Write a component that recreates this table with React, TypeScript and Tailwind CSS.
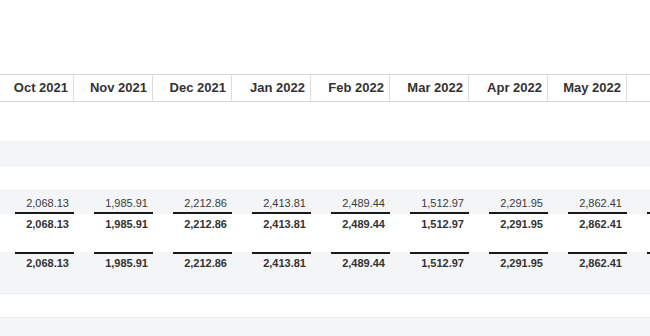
const months = [
  "Oct 2021",
  "Nov 2021",
  "Dec 2021",
  "Jan 2022",
  "Feb 2022",
  "Mar 2022",
  "Apr 2022",
  "May 2022",
  "",
]

// last column is cut off by the window, so it shows no value
const values = [
  "2,068.13",
  "1,985.91",
  "2,212.86",
  "2,413.81",
  "2,489.44",
  "1,512.97",
  "2,291.95",
  "2,862.41",
  "",
]

function Band({ className }: { className: string }) {
  return <div className={`w-full ${className}`} />
}

export default function App() {
  return (
    <div className="w-[650px] h-[336px] overflow-hidden bg-white text-[#333] font-['Liberation_Sans',Arial,sans-serif]">
      <div className="h-[74px]" />

      <div className="-ml-[5px] flex h-[28px] border-y border-[#d6d6d6]">
        {months.map((m, i) => (
          <div
            key={i}
            className="w-[79px] shrink-0 border-r border-[#dcdcdc] flex items-center justify-end pr-[5px] text-[13px] font-bold leading-[16px]"
          >
            {m}
          </div>
        ))}
      </div>

      <Band className="h-[39px]" />
      <Band className="h-[25px] bg-[#f4f5f7] border-y border-[#eceef0]" />
      <Band className="h-[24px]" />

      {/* detail line, underlined */}
      <div className="-ml-[5px] flex h-[24px] bg-[#f4f5f7] border-t border-[#eceef0]">
        {values.map((v, i) => (
          <div key={i} className="w-[79px] shrink-0 pl-[20px]">
            <div className="h-full flex items-end justify-end pr-[5px] pb-[2px] border-b-2 border-[#1a1a1a] text-[11px] leading-[14px] text-[#3a3a3a]">
              {v}
            </div>
          </div>
        ))}
      </div>

      {/* subtotal */}
      <div className="-ml-[5px] flex h-[38px]">
        {values.map((v, i) => (
          <div
            key={i}
            className="w-[79px] shrink-0 flex justify-end pr-[5px] pt-[3px] text-[11px] leading-[14px] font-bold"
          >
            {v}
          </div>
        ))}
      </div>

      {/* total */}
      <div className="-ml-[5px] flex h-[42px] bg-[#f4f5f7] border-b border-[#e9eaec]">
        {values.map((v, i) => (
          <div key={i} className="w-[79px] shrink-0 pl-[20px]">
            <div className="flex justify-end pr-[5px] pt-[2px] border-t-2 border-[#1a1a1a] text-[11px] leading-[14px] font-bold">
              {v}
            </div>
          </div>
        ))}
      </div>

      <Band className="h-[23px]" />
      <Band className="h-[24px] bg-[#f4f5f7] border-t border-[#e9eaec]" />
    </div>
  )
}
